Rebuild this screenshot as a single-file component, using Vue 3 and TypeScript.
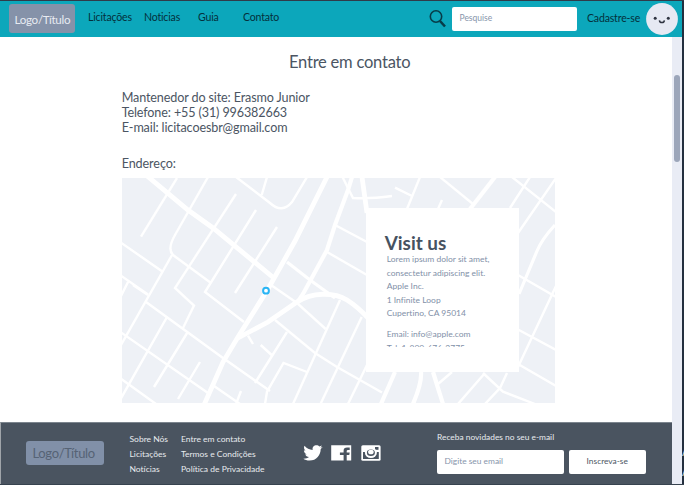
<script setup lang="ts">
interface Road { d: string; w?: number }

const navLinks: string[] = ['Licitações', 'Noticias', 'Guia', 'Contato']
const contactLines: string[] = [
  'Mantenedor do site: Erasmo Junior',
  'Telefone: +55 (31) 996382663',
  'E-mail: licitacoesbr@gmail.com',
]
const siteLinks: string[] = ['Sobre Nós', 'Licitações', 'Notícias']
const legalLinks: string[] = ['Entre em contato', 'Termos e Condições', 'Política de Privacidade']

const roads: Road[] = [
  { d: 'M146 175L188 210L213 228L275 279', w: 4.8 },
  { d: 'M327 177L295 241L268 289L238 337L223 362L204 405', w: 4.8 },
  { d: 'M352 177L348 190L335 225L327 250L303 294L297 303', w: 4.2 },
  { d: 'M238 338L268 322L297 302C312 292 334 292 347 300Q358 307 368 318', w: 4.8 },
  { d: 'M287 262L310 280L335 298', w: 3.2 },
  { d: 'M362 177L367 213', w: 4.8 },
  { d: 'M495 177L470 209', w: 4.2 },
  { d: 'M395 372L381 404', w: 4.2 },
  { d: 'M421 372Q422 383 413 404', w: 4.2 },
  { d: 'M433 372L443 404', w: 4.2 },
  { d: 'M555 225Q542 239 537 251L519 294', w: 3.2 },
  { d: 'M177 178L141 236.700' },
  { d: 'M208 177L175 235Q167 249 173 255L211 283' },
  { d: 'M172 255L121 345' },
  { d: 'M236 194L175 288L194 305.500L183 328' },
  { d: 'M256 210L205 292L244 322' },
  { d: 'M277 227L235 293' },
  { d: 'M120 242L162.700 271.700M120 275L148 294.500M128 282L121 296' },
  { d: 'M236 177L270 203Q282 214 292 202L307 177M267 177L261.700 195' },
  { d: 'M342.500 177L353 198Q370 199 392 196M395 187.700L412 196' },
  { d: 'M335 225L367 242M327 252L367 275' },
  { d: 'M271 285L297 303L325.700 329' },
  { d: 'M275 320L315 353L337 367L382 392.500' },
  { d: 'M340 300L293 404M361.700 317L320.500 404M367 365L348 404' },
  { d: 'M287 332L255 383M260.700 345L272.700 356M307 372L283.500 363L267 391.700L265 404' },
  { d: 'M133 285L148 295M146 302L223 358L270 391' },
  { d: 'M167 317L120 400M187.700 332L154 387M200 362L178 399' },
  { d: 'M120 331.700L208 393M120 378L156 404M214 386L240 404M241 391L236 404M248 335.700L253 344' },
  { d: 'M420 177L407 209M440 177L473 204M442 200L438 209' },
  { d: 'M512 177L556 212M530 177L510 208M556 178L518 233' },
  { d: 'M518 275L556 297M556 286L518 367M518 329.500L556 350M518 364L556 386' },
  { d: 'M452 372L438 384M483 373L503 391.700L535 404M485 373L458 404M507 373L500 388L485 404' },
]
</script>

<template>
  <div class="screen">
    <header class="topbar">
      <div class="logo">Logo/Título</div>
      <nav class="nav">
        <a v-for="link in navLinks" :key="link">{{ link }}</a>
      </nav>
      <svg class="search-icon" viewBox="0 0 18 20">
        <circle cx="7" cy="7.500" r="5.700" fill="none" stroke="#073c48" stroke-width="1.600" />
        <path d="M11 12L16 17.500" stroke="#073c48" stroke-width="2.600" />
      </svg>
      <div class="search">Pesquise</div>
      <a class="signup">Cadastre-se</a>
      <svg class="avatar" viewBox="0 0 32 32">
        <circle cx="16" cy="16" r="15.900" fill="#e6e9f3" />
        <circle cx="9.200" cy="15.300" r="1.500" fill="#2e3340" />
        <circle cx="22.300" cy="15.300" r="1.500" fill="#2e3340" />
        <path d="M13.400 17.300Q13.700 19.600 15.900 19.600T18.400 17.300" fill="none" stroke="#2e3340" stroke-width="1.500" />
      </svg>
    </header>

    <div class="body">
      <div class="page">
        <main class="content">
          <h1>Entre em contato</h1>
          <div class="contact">
            <p v-for="line in contactLines" :key="line">{{ line }}</p>
          </div>
          <p class="address">Endereço:</p>
          <section class="map">
            <svg class="streets" viewBox="122 178 433 225" preserveAspectRatio="none">
              <path v-for="(road, i) in roads" :key="i" :d="road.d" :stroke-width="road.w ?? 2.4" />
              <circle cx="266" cy="290.700" r="2.900" class="pin" />
            </svg>
            <article class="card">
              <h2>Visit us</h2>
              <div class="details">
                <p>Lorem ipsum dolor sit amet,</p>
                <p>consectetur adipiscing elit.</p>
                <p>Apple Inc.</p>
                <p>1 Infinite Loop</p>
                <p>Cupertino, CA 95014</p>
                <p class="spaced">Email: info@apple.com</p>
                <p>Tel: 1-800-676-2775</p>
              </div>
            </article>
          </section>
        </main>

        <footer class="footer">
          <div class="logo footer-logo">Logo/Título</div>
          <div class="links site"><a v-for="link in siteLinks" :key="link">{{ link }}</a></div>
          <div class="links legal"><a v-for="link in legalLinks" :key="link">{{ link }}</a></div>
          <div class="social">
            <svg width="20" height="16" viewBox="0 0 20 16">
              <path fill="#fff" d="M19.700 2.100L17.700 4C17.700 10 13.500 15.600 6.500 15.600C4 15.600 1.900 15 .3 13.800C2.500 13.900 4.600 13.300 6 12.100C4.200 12 2.800 11 2.300 9.300H3.900C2 8.700 .9 7.200 .9 5.300L2.500 5.700C.9 4.500 .6 2.300 1.500 .8C3.600 3.300 6.400 4.700 9.700 4.900C9 2.200 11 .2 13.500 .2C14.700 .2 15.700 .7 16.400 1.400L19 .6L17.400 2.700Z" />
            </svg>
            <svg width="21" height="16" viewBox="0 0 21 16">
              <path fill="#fff" fill-rule="evenodd" d="M.2 .2H20.200V15.600H15.700V10H18.300L18.700 7.400H15.700V6Q15.700 4.900 17 4.900H18.700V2.600H16.100Q12.600 2.600 12.600 5.700V7.400H8.900V10H12.600V15.600H.2Z" />
            </svg>
            <svg width="20" height="16" viewBox="0 0 20 16">
              <rect x=".3" y=".2" width="19.300" height="15.500" rx="1.500" fill="#fff" />
              <rect x="2" y="7" width="15.800" height="7" fill="#4a5460" />
              <rect x="14" y="2" width="3.500" height="2.800" fill="#4a5460" />
              <ellipse cx="9.900" cy="7.800" rx="6" ry="5.200" fill="#fff" />
              <ellipse cx="9.900" cy="7.800" rx="4" ry="3.300" fill="#4a5460" />
              <ellipse cx="9.900" cy="7" rx="2.800" ry="2.300" fill="#fff" />
            </svg>
          </div>
          <div class="newsletter">
            <p>Receba novidades no seu e-mail</p>
            <div class="form">
              <div class="email">Digite seu email</div>
              <button type="button">Inscreva-se</button>
            </div>
          </div>
        </footer>
      </div>
      <div class="scrollbar"><div class="thumb"></div></div>
    </div>

    <div class="edge"><span>A</span><span>A</span></div>
  </div>
</template>

<style>
body { margin: 0; overflow: hidden; }
</style>

<style scoped>
* { box-sizing: border-box; }
p, h1, h2 { margin: 0; }
.screen {
  position: relative;
  width: 684px;
  height: 485px;
  overflow: hidden;
  padding-right: 2px;
  border-top: 1px solid #303b49;
  border-bottom: 1px solid #37434f;
  display: flex;
  flex-direction: column;
  background: #fff;
  font-family: Lato, sans-serif;
  font-variant-ligatures: none;
  color: #4b5563;
  white-space: nowrap;
}
.topbar {
  height: 36px;
  flex: none;
  display: flex;
  align-items: flex-start;
  background: #0ca7bb;
  color: #04303c;
}
.logo {
  width: 66px;
  height: 29px;
  margin: 3px 0 0 9px;
  padding-left: 5.500px;
  border-radius: 3px;
  background: #8592a9;
  color: #e7ebf2;
  font-size: 11.600px;
  letter-spacing: -0.300px;
  line-height: 31px;
}
.nav {
  display: grid;
  grid-template-columns: 56px 54px 45px 60px;
  margin-left: 13px;
  font-size: 10.550px;
  letter-spacing: -0.180px;
  line-height: 33px;
}
.search-icon { width: 18px; height: 20px; margin: 8px 0 0 125.500px; }
.search {
  width: 125.500px;
  height: 24px;
  margin: 6px 0 0 5px;
  padding-left: 8px;
  border-radius: 2px;
  background: #fff;
  color: #8795ab;
  font-size: 8.500px;
  line-height: 23px;
}
.signup { width: 58.500px; margin-left: 10px; font-size: 10.550px; letter-spacing: -0.180px; line-height: 34px; }
.avatar { width: 32px; height: 32px; margin: 2px 0 0 0; }
.body { flex: 1; min-height: 0; display: flex; }
.page { width: 671.500px; display: flex; flex-direction: column; }
.content { flex: 1; min-height: 0; padding: 14px 0 0 121.700px; }
h1 { width: 456px; text-align: center; font-size: 16.550px; letter-spacing: -0.230px; font-weight: 400; line-height: 22px; }
.contact { margin-top: 18px; font-size: 12.600px; letter-spacing: -0.130px; line-height: 14.800px; }
.address { margin-top: 20.600px; font-size: 12.600px; letter-spacing: -0.100px; line-height: 16px; }
.map {
  width: 433px;
  height: 225px;
  margin-top: 6px;
  display: grid;
  background: #eef1f6;
}
.streets { grid-area: 1 / 1; width: 433px; height: 225px; fill: none; stroke: #fff; }
.pin { fill: #fff; stroke: #29b5f5; stroke-width: 2; }
.card {
  grid-area: 1 / 1;
  width: 153px;
  height: 164.500px;
  margin: 30px 0 0 244.500px;
  padding: 25.500px 0 0 18.500px;
  background: #fff;
  z-index: 1;
}
h2 { font-size: 18.900px; font-weight: 700; line-height: 20px; color: #465261; }
.details {
  height: 93.500px;
  overflow: hidden;
  padding-left: 2px;
  font-size: 8.490px;
  line-height: 13.500px;
  color: #8290a8;
}
.spaced { margin-top: 7.500px; }
.footer {
  height: 62px;
  flex: none;
  display: flex;
  align-items: flex-start;
  border-top: 1px solid #7c858e;
  border-left: 1px solid #a0a5aa;
  background: #4a5460;
  color: #e8ebef;
}
.footer-logo {
  width: 78px;
  height: 24px;
  margin: 18px 0 0 25px;
  padding-left: 6.500px;
  color: #566375;
  font-size: 13px;
  letter-spacing: -0.350px;
  line-height: 24px;
  background: #8190a8;
}
.links { display: flex; flex-direction: column; font-size: 8.490px; line-height: 15.200px; margin-top: 8.500px; }
.site { width: 51.500px; margin-left: 25.500px; }
.legal { width: 121.500px; }
.social { display: flex; gap: 8.500px; margin-top: 22px; width: 134.500px; }
.social svg { flex: none; }
.newsletter p { font-size: 8.400px; line-height: 12px; margin-top: 8px; }
.form { display: flex; gap: 5px; margin-top: 7px; }
.email, button {
  height: 23.500px;
  border-radius: 2px;
  background: #fff;
  font-size: 8.400px;
  line-height: 23px;
}
.email { width: 126.500px; padding-left: 7.500px; color: #8795ab; }
button { width: 77.500px; padding: 0; border: 0; font-family: inherit; color: #4b5563; }
.scrollbar { flex: 1; padding: 38px 2px 0 2.500px; background: #e9ecf5; }
.thumb { height: 87px; border-radius: 3px; background: #9ca6ba; }
.edge {
  position: absolute;
  top: 0;
  right: 0;
  width: 2px;
  height: 484px;
  padding-top: 440px;
  overflow: hidden;
  display: flex;
  flex-direction: column;
  background: #24303f;
  color: #c0c8d2;
  font-size: 13px;
  line-height: 20px;
}
</style>
